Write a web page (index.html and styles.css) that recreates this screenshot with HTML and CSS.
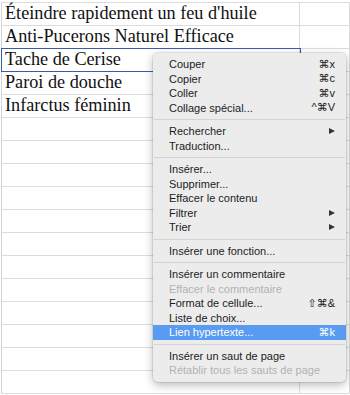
FILE: index.html
```html
<!DOCTYPE html>
<html lang="fr">
<head>
  <meta charset="UTF-8">
  <title>Feuille</title>
  <link rel="stylesheet" href="styles.css">
</head>
<body>
  <div class="sheet">
    <div class="row"><div class="cell">Éteindre rapidement un feu d'huile</div><div class="cell"></div></div>
    <div class="row"><div class="cell">Anti-Pucerons Naturel Efficace</div><div class="cell"></div></div>
    <div class="row"><div class="cell sel">Tache de Cerise</div><div class="cell"></div></div>
    <div class="row"><div class="cell">Paroi de douche</div><div class="cell"></div></div>
    <div class="row"><div class="cell">Infarctus féminin</div><div class="cell"></div></div>
    <div class="row"><div class="cell"></div><div class="cell"></div></div>
    <div class="row"><div class="cell"></div><div class="cell"></div></div>
    <div class="row"><div class="cell"></div><div class="cell"></div></div>
    <div class="row"><div class="cell"></div><div class="cell"></div></div>
    <div class="row"><div class="cell"></div><div class="cell"></div></div>
    <div class="row"><div class="cell"></div><div class="cell"></div></div>
    <div class="row"><div class="cell"></div><div class="cell"></div></div>
    <div class="row"><div class="cell"></div><div class="cell"></div></div>
    <div class="row"><div class="cell"></div><div class="cell"></div></div>
    <div class="row"><div class="cell"></div><div class="cell"></div></div>
    <div class="row"><div class="cell"></div><div class="cell"></div></div>
    <div class="row"><div class="cell"></div><div class="cell"></div></div>
  </div>

  <div class="menu">
    <div class="item"><span>Couper</span><span class="key">⌘x</span></div>
    <div class="item"><span>Copier</span><span class="key">⌘c</span></div>
    <div class="item"><span>Coller</span><span class="key">⌘v</span></div>
    <div class="item"><span>Collage spécial...</span><span class="key">^⌘V</span></div>
    <div class="sep"></div>
    <div class="item"><span>Rechercher</span><span class="arrow"></span></div>
    <div class="item"><span>Traduction...</span></div>
    <div class="sep"></div>
    <div class="item"><span>Insérer...</span></div>
    <div class="item"><span>Supprimer...</span></div>
    <div class="item"><span>Effacer le contenu</span></div>
    <div class="item"><span>Filtrer</span><span class="arrow"></span></div>
    <div class="item"><span>Trier</span><span class="arrow"></span></div>
    <div class="sep"></div>
    <div class="item"><span>Insérer une fonction...</span></div>
    <div class="sep"></div>
    <div class="item"><span>Insérer un commentaire</span></div>
    <div class="item off"><span>Effacer le commentaire</span></div>
    <div class="item"><span>Format de cellule...</span><span class="key">⇧⌘&amp;</span></div>
    <div class="item"><span>Liste de choix...</span></div>
    <div class="item hl"><span>Lien hypertexte...</span><span class="key">⌘k</span></div>
    <div class="sep"></div>
    <div class="item"><span>Insérer un saut de page</span></div>
    <div class="item off"><span>Rétablir tous les sauts de page</span></div>
  </div>
</body>
</html>
```

FILE: styles.css
```css
body {
  margin: 0;
  padding: 0;
  background: #fff;
  overflow: hidden;
}
.sheet {
  margin: 2px 0 0 1px;
  border-top: 1px solid #dcdcdc;
  border-left: 1px solid #d4d4d4;
  font-family: 'Liberation Serif', 'Times New Roman', serif;
  font-size: 18.2px;
  color: #111;
}
.row {
  display: grid;
  grid-template-columns: 298px 1fr;
  height: 22px;
  border-bottom: 1px solid #dcdcdc;
}
.cell {
  border-right: 1px solid #dcdcdc;
  padding: 0 0 0 3px;
  line-height: 20px;
  white-space: nowrap;
  overflow: visible;
}
.sel {
  outline: 1px solid #3a5ca8;
  outline-offset: 0;
}
.menu {
  position: absolute;
  left: 153px;
  top: 53px;
  width: 193px;
  padding: 4px 0;
  background: #ececec;
  border-radius: 5px;
  box-shadow: 0 0 0 1px rgba(0,0,0,0.08), 0 3px 10px rgba(0,0,0,0.28);
  font-family: 'Liberation Sans', Arial, sans-serif;
  font-size: 11px;
  color: #1c1c1c;
}
.item {
  display: flex;
  justify-content: space-between;
  align-items: center;
  height: 14.5px;
  padding: 0 11px 0 16px;
  white-space: nowrap;
}
.item.off {
  color: #b2b2b2;
}
.item.hl {
  background: #5a9bf2;
  color: #fff;
}
.key {
  font-family: 'Liberation Sans', 'DejaVu Sans', sans-serif;
}
.arrow {
  width: 0;
  height: 0;
  border-left: 6px solid #333;
  border-top: 3.5px solid transparent;
  border-bottom: 3.5px solid transparent;
}
.sep {
  height: 1px;
  margin: 4px 1px;
  background: #d3d3d3;
}
```
